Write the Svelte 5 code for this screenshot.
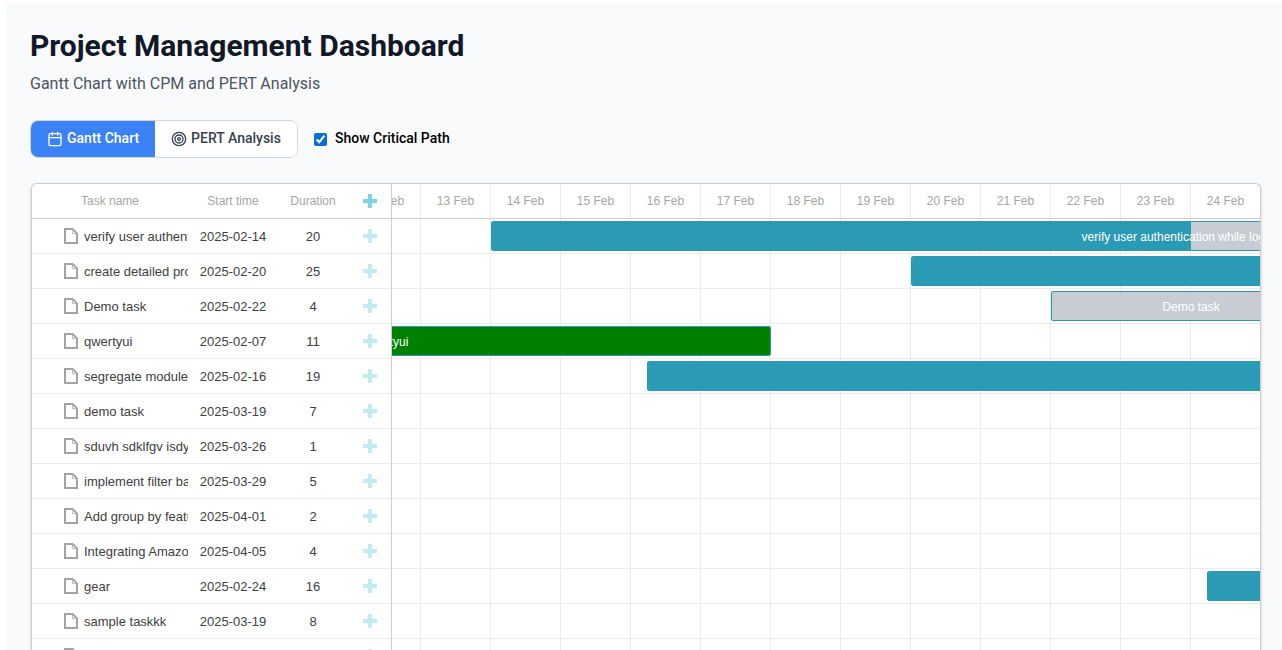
<script lang="ts">
  const dayWidth = 70;
  const scrollOffset = 391; // the chart is scrolled so 7 Feb sits under the grid
  const days = Array.from({ length: 18 }, (_, i) => `${7 + i} Feb`);

  interface Task {
    name: string;
    start: string;
    duration: number;
    offset?: number;
    width?: number;
    progress?: number;
    kind?: string;
  }

  const tasks: Task[] = [
    { name: "verify user authentication while logging in", start: "2025-02-14", duration: 20, offset: 490, width: 1400, progress: 50 },
    { name: "create detailed project plan", start: "2025-02-20", duration: 25, offset: 910, width: 1750, progress: 100 },
    { name: "Demo task", start: "2025-02-22", duration: 4, offset: 1050, width: 280, progress: 0 },
    { name: "qwertyui", start: "2025-02-07", duration: 11, offset: 0, width: 770, progress: 100, kind: "critical" },
    { name: "segregate module", start: "2025-02-16", duration: 19, offset: 646, width: 1330, progress: 100 },
    { name: "demo task", start: "2025-03-19", duration: 7 },
    { name: "sduvh sdklfgv isdyfg", start: "2025-03-26", duration: 1 },
    { name: "implement filter based", start: "2025-03-29", duration: 5 },
    { name: "Add group by feature", start: "2025-04-01", duration: 2 },
    { name: "Integrating Amazon", start: "2025-04-05", duration: 4 },
    { name: "gear", start: "2025-02-24", duration: 16, offset: 1206, width: 1120, progress: 100 },
    { name: "sample taskkk", start: "2025-03-19", duration: 8 },
    { name: "another task", start: "2025-03-27", duration: 3 },
  ];

  let showCritical = $state(true);
  let activeTab = $state("gantt");
</script>

<div class="page">
  <h1>Project Management Dashboard</h1>
  <p class="subtitle">Gantt Chart with CPM and PERT Analysis</p>

  <div class="toolbar">
    <div class="tabs">
      <button class="tab" class:active={activeTab === "gantt"} onclick={() => (activeTab = "gantt")}>
        <svg width="16" height="16" viewBox="0 0 24 24" fill="none" stroke="currentColor" stroke-width="2" stroke-linecap="round" stroke-linejoin="round">
          <path d="M8 2v4M16 2v4" />
          <rect x="3" y="4" width="18" height="18" rx="2" />
          <path d="M3 10h18" />
        </svg>
        <span class="lift">Gantt Chart</span>
      </button>
      <button class="tab" class:active={activeTab === "pert"} onclick={() => (activeTab = "pert")}>
        <svg width="16" height="16" viewBox="0 0 24 24" fill="none" stroke="currentColor" stroke-width="2" stroke-linecap="round" stroke-linejoin="round">
          <circle cx="12" cy="12" r="10" />
          <circle cx="12" cy="12" r="6" />
          <circle cx="12" cy="12" r="2" />
        </svg>
        <span class="lift">PERT Analysis</span>
      </button>
    </div>
    <label class="critical">
      <input type="checkbox" bind:checked={showCritical} />
      <span class="lift">Show Critical Path</span>
    </label>
  </div>

  <div class="gantt">
    <div class="grid">
      <div class="grid-head">
        <div class="col-name">Task name</div>
        <div class="col-start">Start time</div>
        <div class="col-duration">Duration</div>
        <div class="col-add">
          <svg class="plus" width="14" height="14" viewBox="0 0 14 14"><path d="M5 0h4v5h5v4H9v5H5V9H0V5h5z" /></svg>
        </div>
      </div>
      {#each tasks as task}
        <div class="grid-row">
          <div class="col-name cell-name">
            <svg class="file" width="14" height="16" viewBox="0 0 14 16" fill="none">
              <path d="M1 1h7.6L13 5.4V15H1z" stroke="#a3a3a3" stroke-width="2" />
              <path d="M8.4 1v4.6H13" stroke="#b5b5b5" stroke-width="1" />
            </svg>
            <span class="name-text">{task.name}</span>
          </div>
          <div class="col-start">{task.start}</div>
          <div class="col-duration">{task.duration}</div>
          <div class="col-add">
            <svg class="plus light" width="14" height="14" viewBox="0 0 14 14"><path d="M5 0h4v5h5v4H9v5H5V9H0V5h5z" /></svg>
          </div>
        </div>
      {/each}
    </div>

    <div class="timeline">
      <div class="scale">
        <div class="scale-track" style="margin-left: {-scrollOffset}px">
          {#each days as day}
            <div class="scale-cell" style="flex-basis: {dayWidth}px">{day}</div>
          {/each}
        </div>
      </div>
      <div class="chart">
        {#each tasks as task}
          <div class="chart-row" style="margin-left: {-scrollOffset}px">
            {#each days as day}
              <div class="chart-cell" style="flex-basis: {dayWidth}px"></div>
            {/each}
            {#if task.width}
              <div
                class="bar"
                class:critical-bar={task.kind === "critical"}
                style="left: {task.offset}px; width: {task.width}px"
              >
                <div class="bar-progress" style="width: {task.progress}%"></div>
                <div class="bar-text">{task.name}</div>
              </div>
            {/if}
          </div>
        {/each}
      </div>
    </div>
  </div>
</div>

<style>
  :global(html),
  :global(body) {
    margin: 0;
    height: 650px;
    overflow: hidden;
    background: #fff;
  }

  .page {
    margin: 4px 0 0 6px;
    padding: 24px 20px 0 24px;
    height: 646px;
    box-sizing: border-box;
    background: #f9fafb;
    font-family: Roboto, sans-serif;
    overflow: hidden;
  }

  h1 {
    margin: 0;
    font-size: 30px;
    line-height: 36px;
    font-weight: 700;
    color: #111827;
  }

  .subtitle {
    margin: 8px 0 0;
    font-size: 16px;
    line-height: 24px;
    color: #4b5563;
  }

  .toolbar {
    display: flex;
    align-items: center;
    gap: 16px;
    margin-top: 24px;
  }

  .tabs {
    display: flex;
    width: 268px;
    height: 38px;
    box-sizing: border-box;
    border: 1px solid #d1d5db;
    border-radius: 8px;
    background: #fff;
    overflow: hidden;
  }

  .tab {
    display: flex;
    align-items: center;
    gap: 4px;
    padding: 0 16px;
    border: 0;
    background: #fff;
    color: #374151;
    font-family: inherit;
    font-size: 14px;
    font-weight: 500;
    cursor: pointer;
  }

  .tab.active {
    background: #3b82f6;
    color: #fff;
  }

  .lift {
    margin-bottom: 2px;
  }

  .critical {
    display: flex;
    align-items: center;
    gap: 8px;
    font-size: 14px;
    font-weight: 500;
    color: #000;
  }

  .critical input {
    margin: 0;
    width: 13px;
    height: 13px;
    accent-color: #0b6fd0;
  }

  .gantt {
    display: flex;
    margin: 25px 0 0 1px;
    width: 1230px;
    box-sizing: border-box;
    background: #fff;
    border-top: 1px solid #cecece;
    border-left: 1px solid #cecece;
    border-right: 1px solid #cecece;
    border-radius: 6px 6px 0 0;
    box-shadow: 0 1px 3px rgba(0, 0, 0, 0.2);
    font-family: "Liberation Sans", Arial, sans-serif;
    overflow: hidden;
  }

  .grid {
    flex: 0 0 360px;
    box-sizing: border-box;
    border-right: 1px solid #cecece;
  }

  .grid-head {
    display: flex;
    align-items: center;
    height: 35px;
    box-sizing: border-box;
    border-bottom: 1px solid #cecece;
    font-size: 12px;
    color: #a6a6a6;
  }

  .grid-row {
    display: flex;
    align-items: center;
    height: 35px;
    box-sizing: border-box;
    border-bottom: 1px solid #ebebeb;
    font-size: 13px;
    color: #404040;
  }

  .col-name {
    width: 156px;
    padding-left: 49px;
    box-sizing: border-box;
    flex: none;
  }

  .cell-name {
    display: flex;
    align-items: center;
    gap: 6px;
    padding-left: 32px;
  }

  .name-text {
    flex: 1;
    white-space: nowrap;
    overflow: hidden;
  }

  .file {
    flex: none;
  }

  .col-start {
    width: 90px;
    text-align: center;
    flex: none;
  }

  .col-duration {
    width: 70px;
    text-align: center;
    flex: none;
  }

  .col-add {
    width: 43px;
    padding-left: 1px;
    box-sizing: border-box;
    display: flex;
    justify-content: center;
    flex: none;
  }

  .plus {
    fill: #7fd3e4;
  }

  .plus.light {
    fill: #c2ebf2;
  }

  .timeline {
    flex: 1;
    min-width: 0;
    overflow: hidden;
  }

  .scale {
    height: 35px;
    box-sizing: border-box;
    border-bottom: 1px solid #cecece;
    overflow: hidden;
  }

  .scale-track {
    display: flex;
    height: 100%;
  }

  .scale-cell {
    flex: none;
    box-sizing: border-box;
    display: flex;
    align-items: center;
    justify-content: center;
    border-right: 1px solid #ebebeb;
    font-size: 12px;
    color: #a6a6a6;
  }

  .chart-row {
    position: relative;
    display: flex;
    height: 35px;
    box-sizing: border-box;
    border-bottom: 1px solid #ebebeb;
  }

  .chart-cell {
    flex: none;
    box-sizing: border-box;
    border-right: 1px solid #ebebeb;
  }

  .bar {
    position: absolute;
    top: 2px;
    height: 30px;
    box-sizing: border-box;
    background: #c8cdd4;
    border: 1px solid #2a9ab5;
    border-radius: 2px;
    overflow: hidden;
  }

  .bar-progress {
    height: 100%;
    background: #2a9ab5;
  }

  .critical-bar,
  .critical-bar .bar-progress {
    background: #008000;
  }

  .bar-text {
    position: absolute;
    inset: 1px 0 0;
    display: flex;
    align-items: center;
    justify-content: center;
    color: #fff;
    font-size: 12px;
    white-space: nowrap;
  }
</style>
